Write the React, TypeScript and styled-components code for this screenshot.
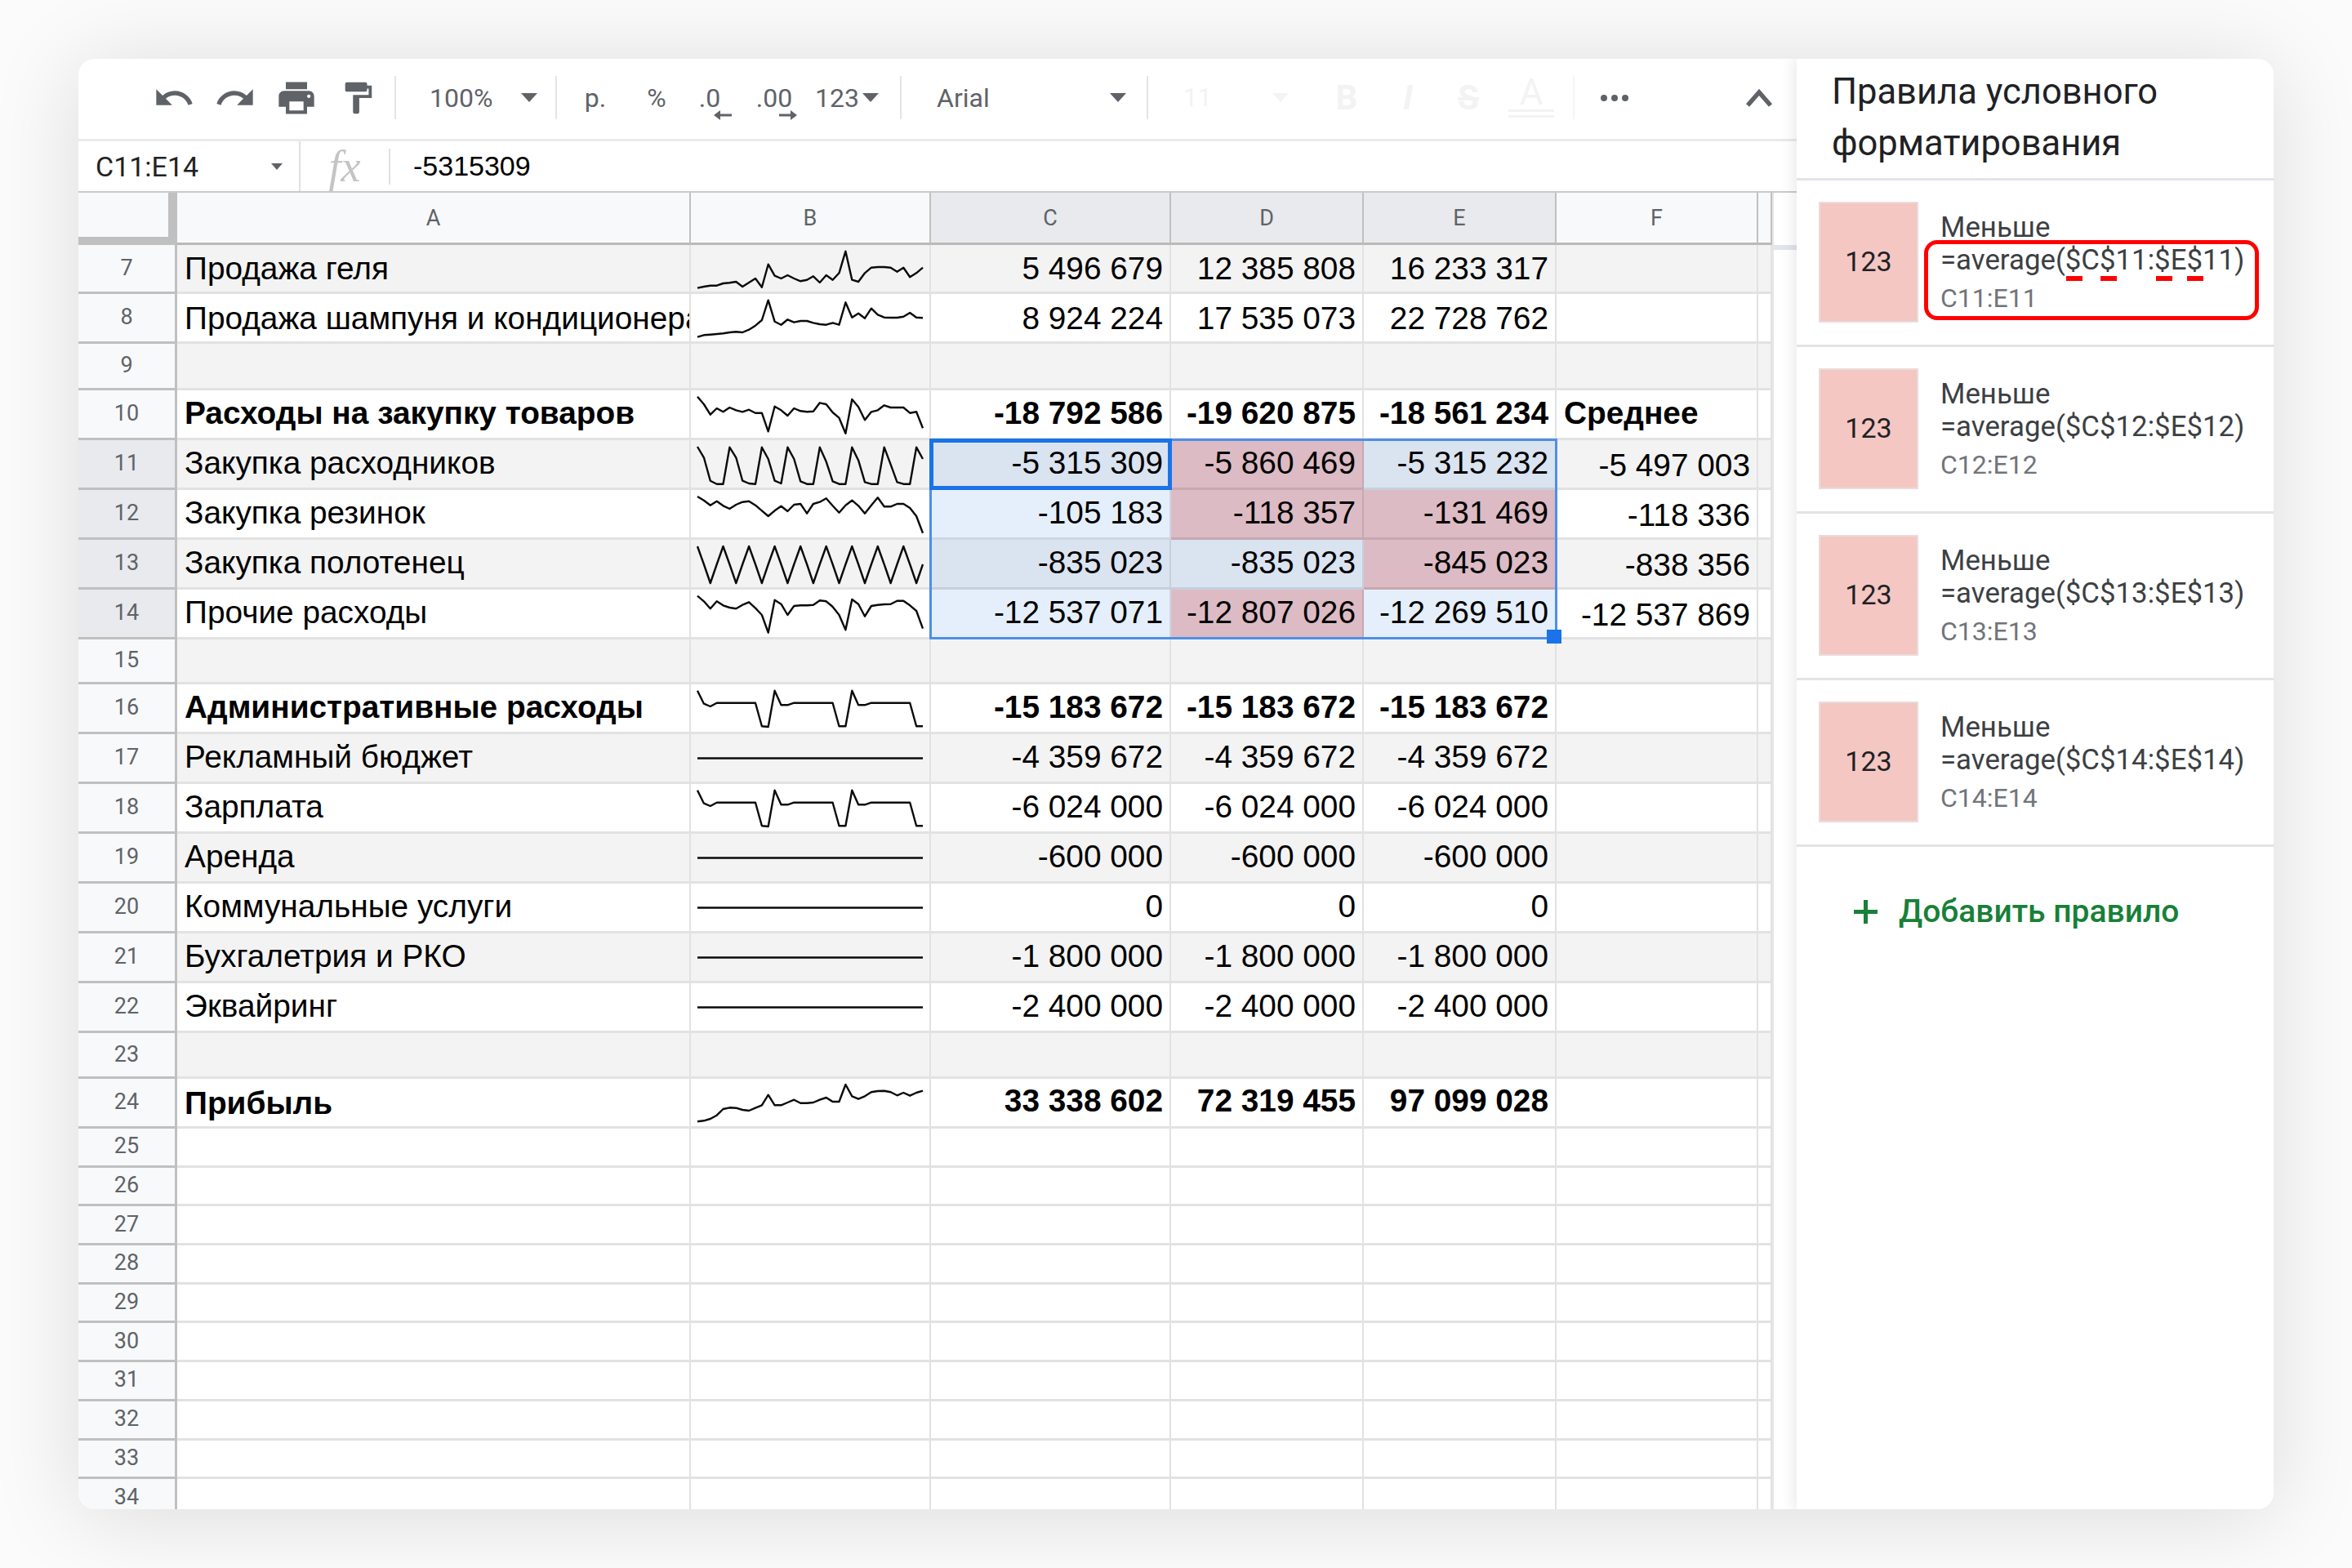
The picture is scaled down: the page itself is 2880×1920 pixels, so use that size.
import React from "react";
import styled, { createGlobalStyle } from "styled-components";

const Global = createGlobalStyle`
  html, body { margin: 0; padding: 0; background: #fbfbfb; }
  * { box-sizing: border-box; }
`;

const Stage = styled.div`
  width: 2880px;
  height: 1920px;
  padding: 72px 96px;
  background: #fbfbfb;
  overflow: hidden;
`;
const Card = styled.div`
  display: flex;
  width: 2688px;
  height: 1776px;
  background: #fff;
  border-radius: 20px;
  overflow: hidden;
  box-shadow: 0 8px 110px rgba(0, 0, 0, 0.13);
`;
const Main = styled.div`
  display: flex;
  flex-direction: column;
  width: 2104px;
  flex: none;
`;
const Toolbar = styled.div`
  display: flex;
  align-items: center;
  flex: none;
  height: 101px;
  padding: 0 0 3px 79px;
  border-bottom: 3px solid #e8eaed;
  color: #5f6368;
  font-family: Roboto, sans-serif;
  font-size: 32px;
`;
const Slot = styled.div<{ $w: number; $pl?: number; $pr?: number; $center?: boolean }>`
  display: flex;
  align-items: center;
  flex: none;
  width: ${(p) => p.$w}px;
  height: 56px;
  padding-left: ${(p) => p.$pl ?? 0}px;
  padding-right: ${(p) => p.$pr ?? 0}px;
  justify-content: ${(p) => (p.$center ? "center" : "flex-start")};
`;
const ToolSep = styled.div<{ $faint?: boolean }>`
  flex: none;
  width: 2px;
  height: 53px;
  background: ${(p) => (p.$faint ? "#f6f6f6" : "#e3e4e6")};
`;
const Triangle = styled.span<{ $faint?: boolean; $small?: boolean }>`
  display: block;
  flex: none;
  width: 0;
  height: 0;
  border-left: ${(p) => (p.$small ? 7 : 10)}px solid transparent;
  border-right: ${(p) => (p.$small ? 7 : 10)}px solid transparent;
  border-top: ${(p) => (p.$small ? 8 : 11)}px solid ${(p) => (p.$faint ? "#f4f4f4" : "#5f6368")};
`;
const PushRight = styled.span`
  margin-left: auto;
`;
const DecimalStack = styled.div`
  display: flex;
  flex-direction: column;
  align-items: center;
  line-height: 36px;
  transform: translateY(5px);
`;
const DecimalArrow = styled.svg<{ $dx: number }>`
  display: block;
  margin-top: -3px;
  transform: translateX(${(p) => p.$dx}px);
`;
const Faint = styled.span<{ $bold?: boolean; $italic?: boolean; $strike?: boolean; $big?: boolean }>`
  color: #f3f3f3;
  font-size: ${(p) => (p.$bold ? 42 : p.$big ? 44 : 31)}px;
  font-weight: ${(p) => (p.$bold ? 700 : 400)};
  font-style: ${(p) => (p.$italic ? "italic" : "normal")};
  text-decoration: ${(p) => (p.$strike ? "line-through" : "none")};
`;
const FaintStack = styled.div`
  display: flex;
  flex-direction: column;
  align-items: center;
  line-height: 42px;
  margin-top: -4px;
`;
const FaintBar = styled.div`
  width: 56px;
  height: 10px;
  border-top: 3px solid #f3f3f3;
  border-bottom: 3px solid #f3f3f3;
`;

const FormulaBar = styled.div`
  display: flex;
  align-items: center;
  flex: none;
  height: 63px;
  border-bottom: 2px solid #c9cacc;
  color: #000;
  font-family: "Liberation Sans", Arial, sans-serif;
  font-size: 34px;
`;
const NameBox = styled.div`
  display: flex;
  align-items: center;
  justify-content: space-between;
  flex: none;
  width: 272px;
  height: 100%;
  padding: 0 20px 0 21px;
  border-right: 2px solid #e0e0e0;
  font-family: Roboto, sans-serif;
  font-size: 34px;
  color: #222;
`;
const FxBox = styled.div`
  display: flex;
  align-items: center;
  justify-content: center;
  flex: none;
  width: 110px;
  height: 44px;
  border-right: 2px solid #e0e0e0;
  font-family: "Liberation Serif", serif;
  font-style: italic;
  font-size: 54px;
  color: #c4c4c4;
`;
const FormulaText = styled.div`
  padding-left: 28px;
`;

const SheetWrap = styled.div`
  display: flex;
  flex: 1;
  min-height: 0;
`;
const Sheet = styled.div`
  position: relative;
  flex: none;
  width: 2074px;
  overflow: hidden;
`;
const ScrollTrack = styled.div`
  flex: 1;
  padding-top: 64px;
  border-left: 2px solid #e6e6e6;
`;
const ScrollThumb = styled.div`
  height: 6px;
  background: #e0e4ec;
`;
const Row = styled.div<{ $h: number }>`
  display: grid;
  grid-template-columns: 121px 629px 294px 294px 236px 236px 247px 17px;
  height: ${(p) => p.$h}px;
`;
const Corner = styled.div`
  background: #f8f9fa;
  border-right: 11px solid #c0c0c0;
  border-bottom: 10px solid #c0c0c0;
`;
const ColHead = styled.div<{ $active?: boolean }>`
  display: flex;
  align-items: center;
  justify-content: center;
  background: ${(p) => (p.$active ? "#e8eaed" : "#f8f9fa")};
  border-right: 2px solid #c0c0c0;
  border-bottom: 3px solid #b9b9b9;
  color: #5f6368;
  font-family: Roboto, sans-serif;
  font-size: 27px;
`;
const RowHead = styled.div<{ $active?: boolean }>`
  display: flex;
  align-items: center;
  justify-content: center;
  padding-bottom: 2px;
  background: ${(p) => (p.$active ? "#e8eaed" : "#f8f9fa")};
  border-right: 3px solid #c0c0c0;
  border-bottom: 3px solid #c0c0c0;
  color: #5f6368;
  font-family: Roboto, sans-serif;
  font-size: 27px;
`;
const toneColor: Record<string, string> = {
  white: "#ffffff",
  gray: "#f3f3f3",
  sel: "#e5effc",
  selGray: "#dae3f0",
  red: "#dcbbc5",
};
const lineColor: Record<string, string> = {
  white: "#e2e2e2",
  gray: "#e2e2e2",
  sel: "#cdd6e2",
  selGray: "#c6cfdb",
  red: "#c6a8b1",
};
const Cell = styled.div<{ $tone: string; $right?: boolean; $bold?: boolean; $pb?: number }>`
  display: flex;
  align-items: flex-end;
  justify-content: ${(p) => (p.$right ? "flex-end" : "flex-start")};
  padding: 0 ${(p) => (p.$right ? 8 : 0)}px ${(p) => p.$pb ?? 8}px ${(p) => (p.$right ? 0 : 9)}px;
  background: ${(p) => toneColor[p.$tone]};
  border-right: 2px solid ${(p) => lineColor[p.$tone]};
  border-bottom: 3px solid ${(p) => lineColor[p.$tone]};
  overflow: hidden;
  white-space: nowrap;
  color: #000;
  font-family: "Liberation Sans", Arial, sans-serif;
  font-size: 38.8px;
  font-weight: ${(p) => (p.$bold ? 700 : 400)};
  line-height: 44px;
`;
const SparkCell = styled.div<{ $tone: string }>`
  padding: 7px 0 0 8px;
  background: ${(p) => toneColor[p.$tone]};
  border-right: 2px solid ${(p) => lineColor[p.$tone]};
  border-bottom: 3px solid ${(p) => lineColor[p.$tone]};
  overflow: hidden;
`;
const SparkSvg = styled.svg`
  display: block;
  overflow: visible;
`;
const RangeBox = styled.div`
  position: absolute;
  left: 1042px;
  top: 301px;
  width: 769px;
  height: 246px;
  border: 3px solid #4f8fe8;
  pointer-events: none;
`;
const ActiveBox = styled.div`
  position: absolute;
  left: 1042px;
  top: 301px;
  width: 297px;
  height: 63px;
  border: 5px solid #1a73e8;
`;
const Handle = styled.div`
  position: absolute;
  left: 1798px;
  top: 535px;
  width: 18px;
  height: 17px;
  background: #1a73e8;
`;

const Panel = styled.div`
  flex: 1;
  position: relative;
  background: #fff;
  box-shadow: -6px 0 14px rgba(0, 0, 0, 0.07);
  font-family: Roboto, sans-serif;
`;
const PanelTitle = styled.div`
  height: 149px;
  padding: 9px 0 0 43px;
  border-bottom: 3px solid #e3e4e8;
  color: #202124;
  font-size: 43.5px;
  line-height: 63px;
`;
const Rule = styled.div`
  position: relative;
  display: flex;
  gap: 27px;
  height: 204px;
  padding: 26px 0 0 27px;
  border-bottom: 3px solid #e2e3e5;
`;
const Swatch = styled.div`
  display: flex;
  align-items: center;
  justify-content: center;
  flex: none;
  width: 122px;
  height: 148px;
  padding-bottom: 2px;
  background: #f4c7c3;
  border: 2px solid #eadcda;
  color: #202124;
  font-size: 34px;
`;
const RuleText = styled.div`
  padding-top: 11px;
  color: #3c4043;
  font-size: 34.8px;
  line-height: 40px;
  white-space: nowrap;
`;
const RuleRange = styled.div`
  margin-top: 7px;
  color: #70757a;
  font-size: 32px;
`;
const RedBox = styled.div`
  position: absolute;
  left: 156px;
  top: 73px;
  width: 410px;
  height: 98px;
  border: 5px solid #f00;
  border-radius: 16px;
`;
const RedDash = styled.div<{ $l: number }>`
  position: absolute;
  left: ${(p) => p.$l}px;
  top: 39px;
  width: 20px;
  height: 6px;
  background: #f00;
`;
const AddRule = styled.div`
  display: flex;
  align-items: center;
  gap: 26px;
  padding: 58px 0 0 70px;
  color: #188038;
  font-size: 39px;
  font-weight: 500;
  line-height: 42px;
`;

const flatHigh = (a: number) => Array(a).fill(15.7);
const adm = [0.7, 16.7, 20, ...flatHigh(7), 44.3, 45, 0.7, 18.3, 18.3, ...flatHigh(7), 44.3, 44.3, 0.7, 18.3, 18.3, ...flatHigh(7), 44.3, 44.3];
const flat = Array(36).fill(22.5);
const saw = Array.from({ length: 36 }, (_, i) => [1, 23, 46, 23][i % 4]);

type RowData = {
  n: number;
  h: number;
  label?: string;
  bold?: boolean;
  spark?: number[];
  vals?: string[];
  f?: string;
  fLabel?: string;
  tones?: string[];
  pbVal?: number;
  pbLabel?: number;
};

const rows: RowData[] = [
  { n: 7, h: 60, pbVal: 6, pbLabel: 6, label: "Продажа геля", vals: ["5 496 679", "12 385 808", "16 233 317"], spark: [45.7,44,42.7,42.7,40,39.3,38,44,39,34,44.7,16.7,30.7,34,30,34,37.3,35.7,31.3,39,30,35.7,27.3,0.7,35.7,38,27.3,20.7,20,20,20.7,25.7,20.7,32.3,27.3,20.7] },
  { n: 8, h: 61, pbVal: 6, pbLabel: 6, label: "Продажа шампуня и кондиционера", vals: ["8 924 224", "17 535 073", "22 728 762"], spark: [45.7,43.3,42.7,42,41.3,40,39.3,40,36.7,31.7,25,0.7,26.7,30.7,24.3,27.7,26,26,28.3,30,30.7,28.3,30.7,3.3,21.7,16.7,22.7,10.7,18.3,21.7,22,22,20.7,16,21.7,22.3] },
  { n: 9, h: 57 },
  { n: 10, h: 61, label: "Расходы на закупку товаров", bold: true, vals: ["-18 792 586", "-19 620 875", "-18 561 234"], fLabel: "Среднее", spark: [0.7,10,22.7,15,19.3,14,17.3,19.3,16.7,20.7,20.7,43.3,12.7,17.3,24,15,18.3,19.3,18.7,8.3,10,20,26.7,45.7,4,13.3,29.3,19.3,17.3,11.3,14,14,14,20.7,19.3,39.3] },
  { n: 11, h: 61, label: "Закупка расходников", vals: ["-5 315 309", "-5 860 469", "-5 315 232"], f: "-5 497 003", tones: ["selGray", "red", "selGray"], spark: [1,14.3,42.7,46.7,46.7,1.7,14.3,42.7,46,46.7,1.7,16,42.7,46,1.7,16,43.3,46.7,46.7,1.7,19.3,43.3,46.7,46.7,1.7,17.7,44.3,46.7,46.7,1.7,22.7,44.3,46.7,46.7,1.7,16] },
  { n: 12, h: 61, label: "Закупка резинок", vals: ["-105 183", "-118 357", "-131 469"], f: "-118 336", tones: ["sel", "red", "red"], spark: [1,5.7,11.7,6.7,12.3,16,11,7.7,6.7,11.7,18.3,25,18.3,12.7,19,11,10,21.7,10,7.7,3.3,12.3,20.7,11.7,5.7,12.3,21.7,11.7,2.3,13.3,13.3,10,10,15,25,45.7] },
  { n: 13, h: 61, label: "Закупка полотенец", vals: ["-835 023", "-835 023", "-845 023"], f: "-838 356", tones: ["selGray", "selGray", "red"], spark: saw },
  { n: 14, h: 61, label: "Прочие расходы", vals: ["-12 537 071", "-12 807 026", "-12 269 510"], f: "-12 537 869", tones: ["sel", "red", "sel"], spark: [0.7,7.3,16.3,7.3,12.3,15,16.3,11.7,8.3,15.7,24,45.7,5.7,10.7,24,13,12.3,12.3,11.7,6.3,7.3,14,24,42.3,5,10.7,25.7,13,11.7,11,10.7,6.7,6.7,12.3,19,40.7] },
  { n: 15, h: 55 },
  { n: 16, h: 61, label: "Административные расходы", bold: true, vals: ["-15 183 672", "-15 183 672", "-15 183 672"], spark: adm },
  { n: 17, h: 61, label: "Рекламный бюджет", vals: ["-4 359 672", "-4 359 672", "-4 359 672"], spark: flat },
  { n: 18, h: 61, label: "Зарплата", vals: ["-6 024 000", "-6 024 000", "-6 024 000"], spark: adm },
  { n: 19, h: 61, label: "Аренда", vals: ["-600 000", "-600 000", "-600 000"], spark: flat },
  { n: 20, h: 61, label: "Коммунальные услуги", vals: ["0", "0", "0"], spark: flat },
  { n: 21, h: 61, label: "Бухгалетрия и РКО", vals: ["-1 800 000", "-1 800 000", "-1 800 000"], spark: flat },
  { n: 22, h: 61, label: "Эквайринг", vals: ["-2 400 000", "-2 400 000", "-2 400 000"], spark: flat },
  { n: 23, h: 56 },
  { n: 24, h: 61, label: "Прибыль", bold: true, vals: ["33 338 602", "72 319 455", "97 099 028"], pbVal: 9, pbLabel: 6, spark: [45.3,44.3,42,37.7,30,28.3,28.7,31,32,28.7,25.3,12.7,25.3,25.3,22,18.7,22.7,22.7,22,18.7,16,21,21,0,14.3,17.7,14.3,9.3,8,7.7,9.3,13.3,10,13.7,10,7.7] },
  ...Array.from({ length: 10 }, (_, i) => ({ n: 25 + i, h: 47.7 })),
];

const Spark = ({ data }: { data: number[] }) => (
  <SparkSvg width="276" height="47" viewBox="0 0 276 47" aria-hidden="true">
    <polyline
      fill="none"
      stroke="#0a0a0a"
      strokeWidth="2.4"
      strokeLinejoin="round"
      points={data.map((y, i) => `${((i * 276) / 35).toFixed(1)},${y}`).join(" ")}
    />
  </SparkSvg>
);

const MIcon = ({ d, w = 52, h = 52 }: { d: string; w?: number; h?: number }) => (
  <svg width={w} height={h} viewBox="0 0 24 24" fill="#5f6368" aria-hidden="true">
    <path d={d} />
  </svg>
);

const UNDO = "M12.5 8c-2.65 0-5.05.99-6.9 2.6L2 7v9h9l-3.62-3.62c1.39-1.16 3.16-1.88 5.12-1.88 3.54 0 6.55 2.31 7.6 5.5l2.37-.78C21.08 11.03 17.15 8 12.5 8z";
const REDO = "M18.4 10.6C16.55 8.99 14.15 8 11.5 8c-4.65 0-8.58 3.03-9.96 7.22L3.9 16c1.05-3.19 4.05-5.5 7.6-5.5 1.95 0 3.73.72 5.12 1.88L13 16h9V7l-3.6 3.6z";
const PRINT = "M19 8H5c-1.66 0-3 1.34-3 3v6h4v4h12v-4h4v-6c0-1.66-1.34-3-3-3zm-3 11H8v-5h8v5zm3-7c-.55 0-1-.45-1-1s.45-1 1-1 1 .45 1 1-.45 1-1 1zm-1-9H6v4h12V3z";
const PAINT = "M18 4V3c0-.55-.45-1-1-1H5c-.55 0-1 .45-1 1v4c0 .55.45 1 1 1h12c.55 0 1-.45 1-1V6h1v4H9v11c0 .55.45 1 1 1h2c.55 0 1-.45 1-1v-9h8V4h-3z";

const rules = ["11", "12", "13", "14"];

export default function App() {
  return (
    <>
      <Global />
      <Stage>
        <Card>
          <Main>
            <Toolbar>
              <Slot $w={75} $center><MIcon d={UNDO} /></Slot>
              <Slot $w={75} $center><MIcon d={REDO} /></Slot>
              <Slot $w={75} $center><MIcon d={PRINT} /></Slot>
              <Slot $w={75} $center><MIcon d={PAINT} w={46} h={46} /></Slot>
              <Slot $w={8} />
              <ToolSep />
              <Slot $w={195} $pl={41} $pr={22}>100%<PushRight /><Triangle /></Slot>
              <ToolSep />
              <Slot $w={94} $center>р.</Slot>
              <Slot $w={56} $center>%</Slot>
              <Slot $w={74} $center>
                <DecimalStack>
                  .0
                  <DecimalArrow $dx={16} width="22" height="12" viewBox="0 0 22 12" aria-hidden="true">
                    <path d="M22 4.5H8V0L0 6l8 6V7.5h14z" fill="#5f6368" />
                  </DecimalArrow>
                </DecimalStack>
              </Slot>
              <Slot $w={84} $center>
                <DecimalStack>
                  .00
                  <DecimalArrow $dx={17} width="22" height="12" viewBox="0 0 22 12" aria-hidden="true">
                    <path d="M0 4.5h14V0l8 6-8 6V7.5H0z" fill="#5f6368" />
                  </DecimalArrow>
                </DecimalStack>
              </Slot>
              <Slot $w={112} $pl={8} $pr={26}>123<PushRight /><Triangle /></Slot>
              <ToolSep />
              <Slot $w={300} $pl={43} $pr={25}>Arial<PushRight /><Triangle /></Slot>
              <ToolSep />
              <Slot $w={194} $pl={43} $pr={22}><Faint>11</Faint><PushRight /><Triangle $faint /></Slot>
              <Slot $w={98} $center><Faint $bold>B</Faint></Slot>
              <Slot $w={52} $center><Faint $bold $italic>I</Faint></Slot>
              <Slot $w={96} $center><Faint $bold $strike>S</Faint></Slot>
              <Slot $w={58} $center>
                <FaintStack><Faint $big>A</Faint><FaintBar /></FaintStack>
              </Slot>
              <Slot $w={22} />
              <ToolSep $faint />
              <Slot $w={98} $center>
                <svg width="36" height="10" viewBox="0 0 36 10" aria-hidden="true">
                  <circle cx="5" cy="5" r="4" fill="#5f6368" />
                  <circle cx="18" cy="5" r="4" fill="#5f6368" />
                  <circle cx="31" cy="5" r="4" fill="#5f6368" />
                </svg>
              </Slot>
              <Slot $w={174} $pl={111}>
                <svg width="34" height="22" viewBox="0 0 34 22" aria-hidden="true">
                  <path d="M3 20L17 4l14 16" fill="none" stroke="#5f6368" strokeWidth="5.5" />
                </svg>
              </Slot>
            </Toolbar>
            <FormulaBar>
              <NameBox>C11:E14<Triangle $small /></NameBox>
              <FxBox>fx</FxBox>
              <FormulaText>-5315309</FormulaText>
            </FormulaBar>
            <SheetWrap>
              <Sheet>
                <Row $h={64}>
                  <Corner />
                  <ColHead>A</ColHead>
                  <ColHead>B</ColHead>
                  <ColHead $active>C</ColHead>
                  <ColHead $active>D</ColHead>
                  <ColHead $active>E</ColHead>
                  <ColHead>F</ColHead>
                  <ColHead />
                </Row>
                {rows.map((r) => {
                  const stripe = r.n <= 23 && r.n % 2 === 1 ? "gray" : "white";
                  const tones = r.tones ?? [stripe, stripe, stripe];
                  const active = r.n >= 11 && r.n <= 14;
                  return (
                    <Row key={r.n} $h={r.h}>
                      <RowHead $active={active}>{r.n}</RowHead>
                      <Cell $tone={stripe} $bold={r.bold} $pb={r.pbLabel}>{r.label}</Cell>
                      <SparkCell $tone={stripe}>{r.spark && <Spark data={r.spark} />}</SparkCell>
                      {tones.map((t, i) => (
                        <Cell key={i} $tone={t} $right $bold={r.bold} $pb={r.pbVal}>{r.vals?.[i]}</Cell>
                      ))}
                      {r.fLabel ? (
                        <Cell $tone={stripe} $bold>{r.fLabel}</Cell>
                      ) : (
                        <Cell $tone={stripe} $right $pb={5}>{r.f}</Cell>
                      )}
                      <Cell $tone={stripe} />
                    </Row>
                  );
                })}
                <RangeBox />
                <ActiveBox />
                <Handle />
              </Sheet>
              <ScrollTrack><ScrollThumb /></ScrollTrack>
            </SheetWrap>
          </Main>
          <Panel>
            <PanelTitle>Правила условного<br />форматирования</PanelTitle>
            {rules.map((n, i) => (
              <Rule key={n}>
                <Swatch>123</Swatch>
                <RuleText>
                  Меньше
                  <br />
                  =average($C${n}:$E${n})
                  <RuleRange>C{n}:E{n}</RuleRange>
                </RuleText>
                {i === 0 && (
                  <RedBox>
                    <RedDash $l={169} />
                    <RedDash $l={211} />
                    <RedDash $l={279} />
                    <RedDash $l={317} />
                  </RedBox>
                )}
              </Rule>
            ))}
            <AddRule>
              <svg width="29" height="29" viewBox="0 0 29 29" aria-hidden="true">
                <path d="M12 0h5v12h12v5H17v12h-5V17H0v-5h12z" fill="#188038" />
              </svg>
              Добавить правило
            </AddRule>
          </Panel>
        </Card>
      </Stage>
    </>
  );
}
